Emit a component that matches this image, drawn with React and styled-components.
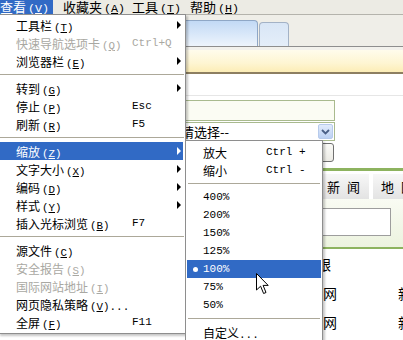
import React from "react";
import styled, { createGlobalStyle } from "styled-components";

const cjk = `"Noto Sans CJK SC", "Noto Sans", sans-serif`;
const mono = `"Liberation Mono", "DejaVu Sans Mono", monospace`;
const hilite = "#316ac5";
const green = "#8db35f";

const GlobalStyle = createGlobalStyle`
  html, body { margin: 0; padding: 0; background: #fff; }
  body { font-family: ${cjk}; }
`;

const Page = styled.div`
  position: relative;
  width: 403px;
  height: 340px;
  overflow: hidden;
  background: #fff;
  font-family: ${cjk};
  color: #000;
`;

/* ---------- menu bar ---------- */
const MenuBar = styled.div`
  display: flex;
  height: 14px;
  margin-left: -10px;
  background: #ecebe4;
  font-size: 13px;
  line-height: 14px;
  overflow: hidden;
`;

const MenuTitle = styled.div`
  width: ${(p) => p.$w}px;
  flex: none;
  box-sizing: border-box;
  padding-left: 10px;
  white-space: nowrap;
  color: ${(p) => (p.$active ? "#fff" : "#000")};
  background: ${(p) => (p.$active ? hilite : "transparent")};
`;

const Acc = styled.span`
  font-family: ${mono};
  font-size: 0.9em;
  margin-left: 2px;
  u { text-decoration-thickness: 1px; text-underline-offset: 1px; }
`;

const Mn = ({ k }) => (
  <Acc>
    (<u>{k}</u>)
  </Acc>
);

/* ---------- tab strip / info bar ---------- */
const TabStrip = styled.div`
  display: flex;
  align-items: flex-end;
  height: 32px;
  box-sizing: border-box;
  padding-top: 5px;
  border-top: 1px solid #b4b3ac;
  background: #efeee8;
`;

const Tab = styled.div`
  height: ${(p) => (p.$active ? 26 : 24)}px;
  width: ${(p) => p.$w}px;
  margin-left: ${(p) => p.$ml}px;
  box-sizing: border-box;
  border: 1px solid ${(p) => (p.$active ? "#8fa7c6" : "#a3b2c6")};
  border-bottom: none;
  border-radius: 4px 4px 0 0;
  background: ${(p) =>
    p.$active
      ? "linear-gradient(#c2d9f5, #e0ecfa 70%, #edf4fc)"
      : "linear-gradient(#d9e6f6, #e4eef9)"};
`;

const TabRule = styled.div`
  height: 4px;
  box-sizing: border-box;
  border-top: 1px solid #8e8e8e;
  background: #f2f1ec;
`;

const InfoBar = styled.div`
  height: 22px;
  border-bottom: 2px solid #8d7f61;
  background: linear-gradient(#fffcec, #fef5d2 60%, #fcedb6);
`;

/* ---------- page content ---------- */
const TopStrip = styled.div`
  height: 21px;
  border-bottom: 1px solid #e6e6e6;
`;

const Form = styled.div`
  display: grid;
  grid-template-columns: 173px;
  row-gap: 1px;
  margin-left: 162px;
  padding-top: 4px;
`;

const Field = styled.div`
  height: 21px;
  box-sizing: border-box;
  border: 1px solid #a9ba8e;
  background: #fbfcf3;
`;

const SelectBox = styled.div`
  display: flex;
  align-items: center;
  justify-content: space-between;
  height: 19px;
  box-sizing: border-box;
  padding-left: 9px;
  border: 1px solid #a9ba8e;
  background: #fff;
  font-size: 13px;
`;

const DropBtn = styled.div`
  display: flex;
  align-items: center;
  justify-content: center;
  width: 15px;
  height: 15px;
  margin-right: 1px;
  box-sizing: border-box;
  border: 1px solid #b7cbec;
  border-radius: 2px;
  background: linear-gradient(#e1ebfb, #bcd1f3);
`;

const Btn = styled.div`
  justify-self: end;
  width: 44px;
  height: 19px;
  margin-top: 1px;
  margin-right: 1px;
  box-sizing: border-box;
  border: 1px solid #707070;
  border-radius: 3px;
  background: linear-gradient(#fafaf7, #ecebe5);
`;

const Panel = styled.div`
  margin-top: 6px;
  border-top: 3px solid ${green};
`;

const PanelTabs = styled.div`
  display: flex;
  gap: 4px;
  padding: 3px 0 0 319px;
  background: #fff;
`;

const PTab = styled.div`
  flex: none;
  width: ${(p) => p.$w}px;
  height: 25px;
  box-sizing: border-box;
  padding-left: 8px;
  line-height: 25px;
  font-size: 13px;
  letter-spacing: 7px;
  white-space: nowrap;
  background: linear-gradient(#f7f7f7, #e3e3e3);
`;

const PanelBody = styled.div`
  height: 50px;
  box-sizing: border-box;
  padding: 9px 0 0 200px;
  border-bottom: 2px solid ${green};
  background: linear-gradient(#f9fbf3, #ecf3df);
`;

const SearchBox = styled.div`
  width: 191px;
  height: 28px;
  box-sizing: border-box;
  border: 1px solid #9d9d9d;
  background: #fff;
`;

const List = styled.div`
  display: grid;
  grid-auto-rows: 29px;
  font-size: 14px;
`;

const ListRow = styled.div`
  display: grid;
  grid-template-columns: ${(p) => p.$cols};
  align-items: center;
  white-space: nowrap;
`;

/* ---------- drop-down menus ---------- */
const DropMenu = styled.div`
  position: absolute;
  left: ${(p) => p.$x}px;
  top: ${(p) => p.$y}px;
  width: ${(p) => p.$w}px;
  box-sizing: border-box;
  padding: ${(p) => p.$pad};
  border: 1px solid #8e8e8e;
  background: #fff;
  box-shadow: 2px 2px 2px rgba(0, 0, 0, 0.22);
  font-size: 12px;
`;

const Item = styled.div`
  display: grid;
  grid-template-columns: ${(p) => p.$cols};
  align-items: center;
  height: 18px;
  padding-left: ${(p) => p.$pl || 0}px;
  padding-right: 2px;
  margin-right: ${(p) => p.$mr || 0}px;
  white-space: nowrap;
  color: ${(p) => (p.$active ? "#fff" : p.$off ? "#a9a8a2" : "#000")};
  background: ${(p) => (p.$active ? hilite : "transparent")};
`;

const Key = styled.span`
  font-family: ${mono};
  font-size: 11px;
`;

const Arrow = styled.span`
  justify-self: end;
  width: 0;
  height: 0;
  border-left: 4px solid currentColor;
  border-top: 4px solid transparent;
  border-bottom: 4px solid transparent;
`;

const Dot = styled.span`
  justify-self: center;
  width: 5px;
  height: 5px;
  border-radius: 50%;
  background: ${(p) => (p.$on ? "currentColor" : "transparent")};
`;

const Sep = styled.div`
  display: flex;
  align-items: center;
  height: 9px;
  padding: 0 1px;
  &::after {
    content: "";
    flex: 1;
    height: 1px;
    background: #aca899;
  }
`;

const Cursor = styled.svg`
  position: absolute;
  left: 256px;
  top: 273px;
`;

const mainItems = [
  { t: "工具栏", k: "T", sub: true },
  { t: "快速导航选项卡", k: "Q", key: "Ctrl+Q", off: true },
  { t: "浏览器栏", k: "E", sub: true },
  "sep",
  { t: "转到", k: "G", sub: true },
  { t: "停止", k: "P", key: "Esc" },
  { t: "刷新", k: "R", key: "F5" },
  "sep",
  { t: "缩放", k: "Z", sub: true, active: true },
  { t: "文字大小", k: "X", sub: true },
  { t: "编码", k: "D", sub: true },
  { t: "样式", k: "Y", sub: true },
  { t: "插入光标浏览", k: "B", key: "F7" },
  "sep",
  { t: "源文件", k: "C" },
  { t: "安全报告", k: "S", off: true },
  { t: "国际网站地址", k: "I", off: true },
  { t: "网页隐私策略", k: "V", more: true },
  { t: "全屏", k: "F", key: "F11" },
];

const zoomItems = [
  { t: "放大", key: "Ctrl +" },
  { t: "缩小", key: "Ctrl -" },
  "sep",
  { t: "400%" },
  { t: "200%" },
  { t: "150%" },
  { t: "125%" },
  { t: "100%", active: true },
  { t: "75%" },
  { t: "50%" },
  "sep",
  { t: "自定义", more: true },
];

export default function App() {
  return (
    <Page>
      <GlobalStyle />
      <MenuBar>
        <MenuTitle $w={63} $active>
          查看<Mn k="V" />
        </MenuTitle>
        <MenuTitle $w={69}>
          收藏夹<Mn k="A" />
        </MenuTitle>
        <MenuTitle $w={58}>
          工具<Mn k="T" />
        </MenuTitle>
        <MenuTitle $w={70}>
          帮助<Mn k="H" />
        </MenuTitle>
      </MenuBar>

      <TabStrip>
        <Tab $active $w={138} $ml={120} />
        <Tab $w={30} $ml={1} />
      </TabStrip>
      <TabRule />
      <InfoBar />

      <TopStrip />
      <Form>
        <Field />
        <SelectBox>
          <span>--请选择--</span>
          <DropBtn>
            <svg width="9" height="6" viewBox="0 0 9 6">
              <path d="M1 1 L4.5 4.5 L8 1" fill="none" stroke="#4a5f86" strokeWidth="1.8" />
            </svg>
          </DropBtn>
        </SelectBox>
        <Btn />
      </Form>

      <Panel>
        <PanelTabs>
          <PTab $w={50}>新闻</PTab>
          <PTab $w={60}>地图</PTab>
        </PanelTabs>
        <PanelBody>
          <SearchBox />
        </PanelBody>
      </Panel>

      <List>
        <ListRow $cols="317px 1fr">
          <span />
          <span>银</span>
        </ListRow>
        <ListRow $cols="323px 75px 1fr">
          <span />
          <span>网</span>
          <span>新</span>
        </ListRow>
        <ListRow $cols="323px 75px 1fr">
          <span />
          <span>网</span>
          <span>新</span>
        </ListRow>
      </List>

      <DropMenu $x={-2} $y={14} $w={188} $pad="1px 0 2px 0">
        {mainItems.map((it, i) =>
          it === "sep" ? (
            <Sep key={i} />
          ) : (
            <Item
              key={i}
              $cols="116px 1fr 8px"
              $pl={17}
              $mr={2}
              $active={it.active}
              $off={it.off}
            >
              <span>
                {it.t}
                <Mn k={it.k} />
                {it.more && <Key>...</Key>}
              </span>
              <Key>{it.key || ""}</Key>
              {it.sub ? <Arrow /> : <span />}
            </Item>
          )
        )}
      </DropMenu>

      <DropMenu $x={185} $y={140} $w={138} $pad="2px 1px">
        {zoomItems.map((it, i) =>
          it === "sep" ? (
            <Sep key={i} />
          ) : (
            <Item key={i} $cols="16px 63px 1fr" $active={it.active}>
              <Dot $on={it.active} />
              {/%$/.test(it.t) ? (
                <Key>{it.t}</Key>
              ) : (
                <span>
                  {it.t}
                  {it.more && <Key>...</Key>}
                </span>
              )}
              <Key>{it.key || ""}</Key>
            </Item>
          )
        )}
      </DropMenu>

      <Cursor width="13" height="22" viewBox="0 0 13 22">
        <path
          d="M0.5 0.5 L0.5 17 L4.6 13.2 L7.6 20.5 L10 19.5 L7.1 12.4 L12.2 12.4 Z"
          fill="#fff"
          stroke="#000"
          strokeWidth="1"
          strokeLinejoin="round"
        />
      </Cursor>
    </Page>
  );
}
